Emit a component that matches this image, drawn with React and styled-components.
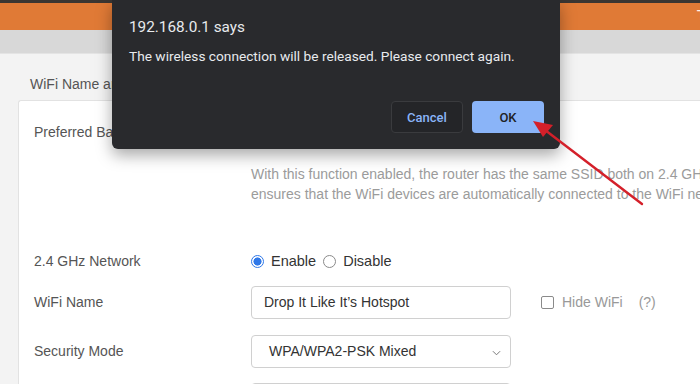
import React from 'react';
import styled, { createGlobalStyle } from 'styled-components';

const GlobalStyle = createGlobalStyle`
  html, body {
    margin: 0;
    padding: 0;
    background: #f3f3f3;
  }
  body {
    font-family: "Liberation Sans", Arial, sans-serif;
  }
`;

const App = () => {
  return (
    <Page>
      <GlobalStyle />
      <TopStrip />
      <Header>
        <HeaderText>T</HeaderText>
      </Header>
      <SubBar />
      <Main>
        <SectionTitle>WiFi Name and Password</SectionTitle>
        <Card>
          <Row $height={62}>
            <Label>Preferred Band</Label>
            <Control />
          </Row>
          <Note>
            With this function enabled, the router has the same SSID both on 2.4 GHz and 5 GHz
            <br />
            ensures that the WiFi devices are automatically connected to the WiFi network
          </Note>
          <Row $height={40} $top={37}>
            <Label>2.4 GHz Network</Label>
            <Control>
              <Radio $checked />
              <RadioText>Enable</RadioText>
              <Radio />
              <RadioText>Disable</RadioText>
            </Control>
          </Row>
          <Row $height={42}>
            <Label>WiFi Name</Label>
            <Control>
              <Field>Drop It Like It’s Hotspot</Field>
              <Check />
              <Muted>Hide WiFi</Muted>
              <Muted $gap={16}>(?)</Muted>
            </Control>
          </Row>
          <Row $height={56}>
            <Label>Security Mode</Label>
            <Control>
              <Field $select>
                WPA/WPA2-PSK Mixed
                <Chevron viewBox="0 0 10 6">
                  <path d="M1 1l4 4 4-4" fill="none" stroke="#777" strokeWidth="1.1" />
                </Chevron>
              </Field>
            </Control>
          </Row>
          <Row $height={40}>
            <Label />
            <Control>
              <Field />
            </Control>
          </Row>
        </Card>
      </Main>

      <Dialog>
        <DialogTitle>192.168.0.1 says</DialogTitle>
        <DialogText>The wireless connection will be released. Please connect again.</DialogText>
        <DialogActions>
          <CancelButton>Cancel</CancelButton>
          <OkButton>OK</OkButton>
        </DialogActions>
      </Dialog>

      <Arrow viewBox="0 0 700 384">
        <line x1="642" y1="204" x2="545" y2="130" stroke="#d4202a" strokeWidth="2.4" strokeLinecap="round" />
        <polygon points="533,121 553,125 543,137" fill="#d4202a" />
      </Arrow>
    </Page>
  );
};

export default App;

const Page = styled.div`
  position: relative;
  width: 700px;
  height: 384px;
  overflow: hidden;
  background: #f3f3f3;
`;

const TopStrip = styled.div`
  height: 3px;
  background: #3b3632;
`;

const Header = styled.div`
  height: 27px;
  background: #e07a36;
  display: flex;
  justify-content: flex-end;
  align-items: flex-start;
`;

const HeaderText = styled.span`
  color: #fff3e6;
  font-size: 15px;
  line-height: 15px;
  margin-top: 4px;
  margin-right: -6px;
`;

const SubBar = styled.div`
  height: 23px;
  background: #d8d8d8;
  border-bottom: 1px solid #e4e4e4;
`;

const Main = styled.div`
  padding-left: 18px;
`;

const SectionTitle = styled.div`
  font-size: 14px;
  color: #555;
  padding: 22px 0 0 12px;
  height: 24px;
`;

const Card = styled.div`
  background: #fff;
  border: 1px solid #e2e2e2;
  border-right: none;
  border-top-left-radius: 3px;
  padding: 0 0 0 15px;
  height: 300px;
`;

const Row = styled.div`
  display: grid;
  grid-template-columns: 217px 1fr;
  align-items: center;
  height: ${(p) => p.$height}px;
  margin-top: ${(p) => p.$top || 0}px;
`;

const Label = styled.div`
  font-size: 14px;
  color: #555;
`;

const Control = styled.div`
  display: flex;
  align-items: center;
`;

const Note = styled.div`
  margin: 1px 0 0 217px;
  font-size: 14px;
  line-height: 20px;
  color: #9b9b9b;
  white-space: nowrap;
`;

const Radio = styled.span`
  width: 13px;
  height: 13px;
  border-radius: 50%;
  box-sizing: border-box;
  border: ${(p) => (p.$checked ? '1px solid #2f78e8' : '1px solid #8a8a8a')};
  background: ${(p) => (p.$checked ? 'radial-gradient(circle, #2f78e8 0 3.8px, #fff 4.3px)' : '#fff')};
  margin-right: 7px;
`;

const RadioText = styled.span`
  font-size: 14.5px;
  color: #333;
  margin-right: 7px;
`;

const Field = styled.div`
  position: relative;
  box-sizing: border-box;
  width: 260px;
  height: 33px;
  border: 1px solid #d0d0d0;
  border-radius: 4px;
  padding-left: ${(p) => (p.$select ? 17 : 12)}px;
  display: flex;
  align-items: center;
  font-size: 14px;
  color: #333;
`;

const Chevron = styled.svg`
  position: absolute;
  right: 9px;
  top: 14px;
  width: 9px;
  height: 6px;
`;

const Check = styled.span`
  width: 13px;
  height: 13px;
  box-sizing: border-box;
  border: 1px solid #8a8a8a;
  border-radius: 2px;
  margin-left: 30px;
  margin-right: 8px;
`;

const Muted = styled.span`
  font-size: 14px;
  color: #999;
  margin-left: ${(p) => p.$gap || 0}px;
`;

const Dialog = styled.div`
  position: absolute;
  left: 112px;
  top: 0;
  width: 448px;
  height: 149px;
  box-sizing: border-box;
  background: #292a2d;
  border-radius: 0 0 6px 6px;
  box-shadow: 0 6px 16px rgba(0, 0, 0, 0.35);
  padding: 17px 16px 0 17px;
  font-family: Roboto, "Liberation Sans", sans-serif;
  color: #e8eaed;
`;

const DialogTitle = styled.div`
  font-size: 15.3px;
  line-height: 20px;
`;

const DialogText = styled.div`
  font-size: 13.7px;
  line-height: 18px;
  margin-top: 10px;
`;

const DialogActions = styled.div`
  display: flex;
  justify-content: flex-end;
  gap: 9px;
  margin-top: 36px;
`;

const ButtonBase = styled.div`
  width: 72px;
  height: 32px;
  box-sizing: border-box;
  border-radius: 4px;
  display: flex;
  align-items: center;
  justify-content: center;
  font-size: 13px;
  font-weight: 500;
`;

const CancelButton = styled(ButtonBase)`
  border: 1px solid #3a3b3e;
  background: #242528;
  color: #8ab4f8;
`;

const OkButton = styled(ButtonBase)`
  background: #8ab4f8;
  color: #202124;
`;

const Arrow = styled.svg`
  position: absolute;
  left: 0;
  top: 0;
  width: 700px;
  height: 384px;
  pointer-events: none;
`;
